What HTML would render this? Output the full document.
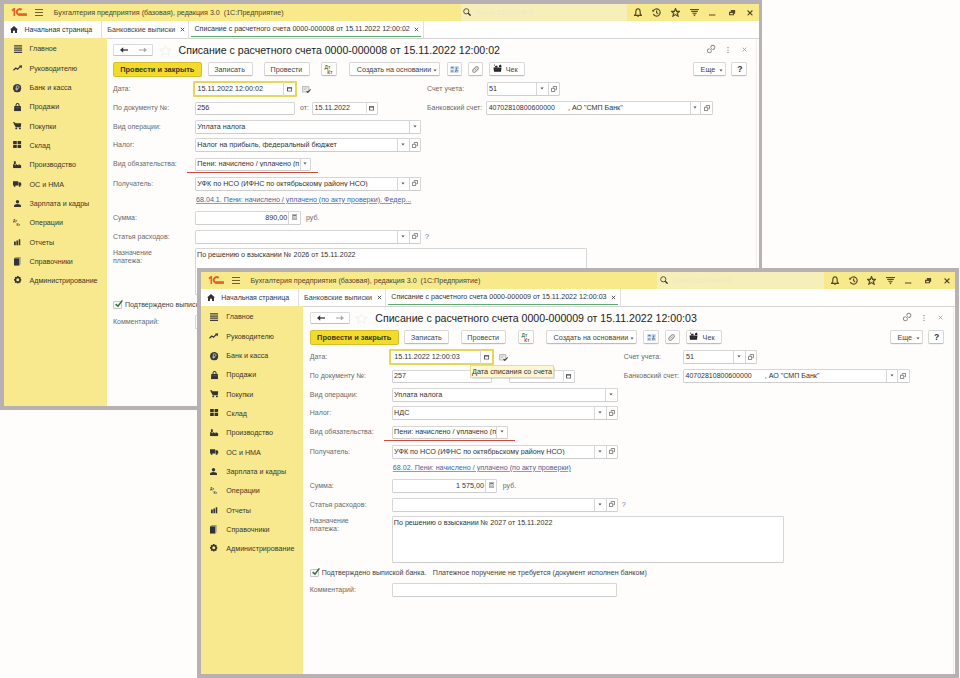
<!DOCTYPE html>
<html><head><meta charset="utf-8"><style>
html,body{margin:0;padding:0;}
body{width:960px;height:678px;position:relative;overflow:hidden;background:#fefdfc;font-family:"Liberation Sans",sans-serif;}
#wrap{position:absolute;left:0;top:0;width:960px;height:678px}
.win{position:absolute;width:762px;height:410px;overflow:hidden}
.r{position:absolute;display:block;overflow:visible}
.t{position:absolute;white-space:nowrap;line-height:1}
</style></head><body>

<svg width="0" height="0" style="position:absolute">
<defs>
<symbol id="dd" viewBox="0 0 4 3"><path d="M0.4 0.4H3.6L2 2.4Z" fill="#555"/></symbol>
<symbol id="op" viewBox="0 0 6 6"><path d="M2.3 1.6V0.45H5.55V3.7H4.4" fill="none" stroke="#666" stroke-width="0.8"/><path d="M0.45 2.3H3.7V5.55H0.45Z" fill="none" stroke="#666" stroke-width="0.8"/></symbol>
<symbol id="cal" viewBox="0 0 6 5"><path d="M0 0H6V5H0Z M1 1.6V4H5V1.6Z" fill="#444" fill-rule="evenodd"/></symbol>
<symbol id="logo" viewBox="0 0 16 8"><path d="M0.5 2.1L2.7 0H4.1V7.9H2.5V2.6L1.3 3.4Z" fill="#de6428"/><path d="M10.6 1.9A2.9 2.9 0 1 0 8.4 6.9" fill="none" stroke="#de6428" stroke-width="2"/><path d="M7.6 5.2H15.9V7.9H7.6Z" fill="#de6428"/></symbol>
<symbol id="ham" viewBox="0 0 8 7"><path d="M0 0.5H8M0 3.5H8M0 6.5H8" stroke="#6e6230" stroke-width="1.1"/></symbol>
<symbol id="home" viewBox="0 0 8 7"><path d="M4 0L8 3.6H7V7H5V4.8H3V7H1V3.6H0Z" fill="#333"/></symbol>
<symbol id="i0" viewBox="0 0 8 8"><path d="M0 0.3H8V1.5H0ZM0 2.4H8V3.6H0ZM0 4.5H8V5.7H0ZM0 6.6H8V7.8H0Z" fill="#3c3c3c"/></symbol>
<symbol id="i1" viewBox="0 0 10 6"><path d="M0.5 5.4L3 3L4.8 4.2L7.5 1.6" fill="none" stroke="#333" stroke-width="1.3"/><path d="M6.2 0.6L9.6 0.2L9 3.4Z" fill="#333"/></symbol>
<symbol id="i2" viewBox="0 0 8 8"><circle cx="4" cy="4" r="4" fill="#3a3a3a"/><path d="M3.2 6.3V1.8H4.6A1.2 1.2 0 0 1 4.6 4.2H2.5M2.5 5.2H4.8" fill="none" stroke="#bbb" stroke-width="0.8"/></symbol>
<symbol id="i3" viewBox="0 0 7 8"><path d="M0.3 3H6.7L7 8H0Z" fill="#333"/><path d="M2 3.2V2A1.5 1.5 0 0 1 5 2V3.2" fill="none" stroke="#333" stroke-width="1"/><path d="M1.5 4.6H5.5" stroke="#777" stroke-width="0.5"/></symbol>
<symbol id="i4" viewBox="0 0 8 7"><path d="M0 0.1H1.7L2.3 1.1H8L7.3 4.9H2.6Z" fill="#333"/><circle cx="3.1" cy="6.1" r="0.95" fill="#333"/><circle cx="6.6" cy="6.1" r="0.95" fill="#333"/></symbol>
<symbol id="i5" viewBox="0 0 8 7"><path d="M0 0H3.6V3.1H0ZM4.4 0H8V3.1H4.4ZM0 3.9H3.6V7H0ZM4.4 3.9H8V7H4.4Z" fill="#333"/></symbol>
<symbol id="i6" viewBox="0 0 8 7"><path d="M0 7V3L2.7 4.4V3L5.4 4.4V3L8 4.4V7Z" fill="#333"/><path d="M0.8 0.3H2.6V3.4H0.8Z" fill="#333"/></symbol>
<symbol id="i7" viewBox="0 0 9 6"><path d="M0 0H5.5V4.6H0ZM5.9 1.2H7.8L9 2.8V4.6H5.9Z" fill="#333"/><circle cx="1.8" cy="5" r="1" fill="#333"/><circle cx="7" cy="5" r="1" fill="#333"/></symbol>
<symbol id="i8" viewBox="0 0 7 7"><circle cx="3.5" cy="1.7" r="1.7" fill="#333"/><path d="M0 7V5.8Q0.3 3.9 3.5 3.9Q6.7 3.9 7 5.8V7Z" fill="#333"/></symbol>
<symbol id="i9" viewBox="0 0 8 7"><text x="0" y="3" font-family="Liberation Sans" font-size="3.5" font-weight="bold" fill="#3a3a3a">Дт</text><text x="3.6" y="6.9" font-family="Liberation Sans" font-size="3.5" font-weight="bold" fill="#3a3a3a">Кт</text></symbol>
<symbol id="i10" viewBox="0 0 7 7"><path d="M0 2.6H1.9V7H0ZM2.6 1.6H4.4V7H2.6ZM5.1 0.3H7V7H5.1Z" fill="#333"/></symbol>
<symbol id="i11" viewBox="0 0 7 9"><path d="M0 1.2H5.6V9H0Z" fill="#333"/><path d="M1.2 0H7V7.8H5.8V1.2H1.2Z" fill="#999"/></symbol>
<symbol id="i12" viewBox="0 0 8 8"><path d="M3.2 0H4.8L5.1 1.3L6.3 0.7L7.3 1.7L6.7 2.9L8 3.2V4.8L6.7 5.1L7.3 6.3L6.3 7.3L5.1 6.7L4.8 8H3.2L2.9 6.7L1.7 7.3L0.7 6.3L1.3 5.1L0 4.8V3.2L1.3 2.9L0.7 1.7L1.7 0.7L2.9 1.3Z" fill="#333"/><circle cx="4" cy="4" r="1.6" fill="#f7e68a"/></symbol>
<symbol id="search" viewBox="0 0 8 8"><circle cx="3.3" cy="3.3" r="2.6" fill="none" stroke="#5a5040" stroke-width="1"/><path d="M5.2 5.2L7.6 7.6" stroke="#333" stroke-width="1.4"/></symbol>
<symbol id="bell" viewBox="0 0 8 9"><path d="M4 0.8Q6.2 1 6.2 4V5.8L7.5 7.3H0.5L1.8 5.8V4Q1.8 1 4 0.8Z" fill="none" stroke="#54492c" stroke-width="1.15"/><circle cx="4" cy="8.2" r="0.8" fill="#54492c"/></symbol>
<symbol id="hist" viewBox="0 0 9 9"><path d="M1.3 3A3.6 3.6 0 1 1 1.3 6" fill="none" stroke="#54492c" stroke-width="1.15"/><path d="M0.2 1.6L2.4 3.3L0.4 4Z" fill="#54492c"/><path d="M4.6 2.4V4.8L6.2 5.8" fill="none" stroke="#54492c" stroke-width="1.15"/></symbol>
<symbol id="star" viewBox="0 0 9 9"><path d="M4.5 0.6L5.6 3.3L8.5 3.4L6.3 5.2L7.1 8.2L4.5 6.6L1.9 8.2L2.7 5.2L0.5 3.4L3.4 3.3Z" fill="none" stroke="#54492c" stroke-width="1.2"/></symbol>
<symbol id="filt" viewBox="0 0 9 8"><path d="M0 0.5H9M1.2 2.4H7.8M2.4 4.2H6.6" stroke="#54492c" stroke-width="1.15"/><path d="M3.2 5.6H5.8L4.5 7.4Z" fill="#54492c"/></symbol>
<symbol id="minim" viewBox="0 0 8 2"><path d="M0 1H8" stroke="#54492c" stroke-width="1.3"/></symbol>
<symbol id="rest" viewBox="0 0 7 6"><path d="M2 0H7V4H5.5V6H0V2H2Z M1.3 3.3V4.7H4.2V3.3Z" fill="#54492c" fill-rule="evenodd"/></symbol>
<symbol id="close" viewBox="0 0 6 6"><path d="M0.5 0.5L5.5 5.5M5.5 0.5L0.5 5.5" stroke="#54492c" stroke-width="1.2"/></symbol>
<symbol id="tabx" viewBox="0 0 5 5"><path d="M0.8 0.8L4.2 4.2M4.2 0.8L0.8 4.2" stroke="#444" stroke-width="0.9"/></symbol>
<symbol id="larr" viewBox="0 0 8 6"><path d="M8 3H1.5" stroke="#333" stroke-width="1.3"/><path d="M0 3L3.2 0.2V5.8Z" fill="#333"/></symbol>
<symbol id="rarr" viewBox="0 0 8 6"><path d="M0 3H6.5" stroke="#aaa" stroke-width="1.1"/><path d="M8 3L4.8 0.4V5.6Z" fill="#aaa"/></symbol>
<symbol id="fstar" viewBox="0 0 15 11"><path d="M7.5 0.5L9 4L13.5 4.2L10 6.6L11.2 10.5L7.5 8.3L3.8 10.5L5 6.6L1.5 4.2L6 4Z" fill="none" stroke="#f0f0f0" stroke-width="1"/></symbol>
<symbol id="link" viewBox="0 0 9 9"><g fill="none" stroke="#8c8c8c" stroke-width="0.9"><path d="M4.227 3.313A1.8 1.8 0 1 1 5.687 4.773"/><path d="M4.773 5.687A1.8 1.8 0 1 1 3.313 4.227"/><path d="M3.8 5.2L5.2 3.8"/></g></symbol>
<symbol id="dots" viewBox="0 0 2 6"><circle cx="1" cy="0.7" r="0.6" fill="#707070"/><circle cx="1" cy="3" r="0.6" fill="#707070"/><circle cx="1" cy="5.3" r="0.6" fill="#707070"/></symbol>
<symbol id="fclose" viewBox="0 0 5 5"><path d="M0.6 0.6L4.4 4.4M4.4 0.6L0.6 4.4" stroke="#9a9a9a" stroke-width="0.8"/></symbol>
<symbol id="dtkt" viewBox="0 0 10 9"><text x="0.6" y="4" font-family="Liberation Sans" font-size="4.8" font-weight="bold" fill="#4e7d44">Дт</text><text x="3.3" y="8.9" font-family="Liberation Sans" font-size="4.8" font-weight="bold" fill="#9c4a40">Кт</text></symbol>
<symbol id="tbl" viewBox="0 0 9 7"><path d="M0 0H9V7H0Z" fill="#dfe8f2"/><path d="M0.6 0.6H4V3H0.6ZM5 0.6H8.4V3H5ZM0.6 4H4V6.4H0.6ZM5 4H8.4V6.4H5Z" fill="#b3c6dc"/><path d="M1.2 1.5H3.4M2 4.3V6M6.8 1.5L5.5 6M6.5 4.6H7.8" stroke="#5a7596" stroke-width="0.9"/></symbol>
<symbol id="clip" viewBox="0 0 7 7"><g transform="rotate(-45 3.5 3.5)"><rect x="0.2" y="2" width="6.6" height="3" rx="1.5" fill="none" stroke="#9a9a9a" stroke-width="1.2"/><path d="M2 3.5H5" stroke="#aaa" stroke-width="0.9"/></g></symbol>
<symbol id="kkm" viewBox="0 0 9 8"><path d="M0.5 3.5H8.5L8 7.8H1Z" fill="#222"/><path d="M1.5 3.5L2.5 1.8H4.5L4.5 3.5Z" fill="#222"/><path d="M6 1.5L8 0.4L8.5 3H6Z" fill="#222"/><circle cx="1.5" cy="1" r="0.6" fill="#222"/><path d="M2 5.2H7" stroke="#777" stroke-width="0.4"/></symbol>
<symbol id="docck" viewBox="0 0 9 7"><path d="M0.4 0.4H6.8V6H0.4Z" fill="#eee" stroke="#aaa" stroke-width="0.8"/><path d="M1.5 2H5.5M1.5 3.5H4" stroke="#aaa" stroke-width="0.6"/><path d="M4.5 5.2L5.8 6.4L8.6 3.4" fill="none" stroke="#444" stroke-width="1.1"/></symbol>
<symbol id="calc" viewBox="0 0 5 6"><path d="M0.3 0.3H4.7V5.7H0.3Z" fill="none" stroke="#666" stroke-width="0.6"/><path d="M1 1H4V2.2H1Z" fill="#777"/><path d="M1 3.2H1.8M2.1 3.2H2.9M3.2 3.2H4M1 4.6H1.8M2.1 4.6H2.9M3.2 4.6H4" stroke="#777" stroke-width="0.7"/></symbol>
<symbol id="ck" viewBox="0 0 9 9"><path d="M1.6 4.2L4 6.2L8.4 0.4" fill="none" stroke="#3c6a48" stroke-width="1.5"/></symbol>
</defs></svg>

<div id="wrap">
<div class="win" style="left:0px;top:0px">
<div class="r" style="left:0px;top:0px;width:762.00px;height:410.00px;background:#b7b1b3"></div>
<div class="r" style="left:4px;top:4px;width:754.50px;height:16.70px;background:#f8e98a"></div>
<div class="r" style="left:4px;top:20.7px;width:754.50px;height:17.30px;background:#fff"></div>
<div class="r" style="left:4px;top:38px;width:754.50px;height:1.00px;background:#d4d4d4"></div>
<div class="r" style="left:4px;top:38px;width:102.50px;height:368.00px;background:#f8e98e"></div>
<div class="r" style="left:106.5px;top:39px;width:652.00px;height:367.00px;background:#fefdfb"></div>
<div class="r" style="left:755.8px;top:39px;width:0.70px;height:367.00px;background:#eeeeee"></div>
<svg class="r" style="left:11px;top:8px;" width="16.00" height="8.00"><use href="#logo"/></svg>
<svg class="r" style="left:35px;top:8.7px;" width="8.00" height="7.00"><use href="#ham"/></svg>
<div class="t" style="left:53.8px;top:9.61px;font-size:7.15px;color:#4b4530;font-weight:normal;">Бухгалтерия предприятия (базовая), редакция 3.0&nbsp; (1С:Предприятие)</div>
<div class="r" style="left:460.5px;top:4px;width:166.50px;height:16.70px;background:#f7efb9"></div>
<svg class="r" style="left:463px;top:8.3px;" width="8.00" height="8.00"><use href="#search"/></svg>
<div class="t" style="left:475.5px;top:9.38px;font-size:7px;color:#efe8c4;font-weight:normal;">Поиск Ctrl+Shift+F</div>
<svg class="r" style="left:633.8px;top:8.2px;" width="8.00" height="9.00"><use href="#bell"/></svg>
<svg class="r" style="left:652.2px;top:8px;" width="9.00" height="9.00"><use href="#hist"/></svg>
<svg class="r" style="left:670.7px;top:7.8px;" width="9.00" height="9.00"><use href="#star"/></svg>
<svg class="r" style="left:689.7px;top:8.7px;" width="9.00" height="8.00"><use href="#filt"/></svg>
<svg class="r" style="left:708.7px;top:13.8px;" width="6.60" height="2.00"><use href="#minim"/></svg>
<svg class="r" style="left:728.6px;top:9.8px;" width="6.40" height="5.50"><use href="#rest"/></svg>
<svg class="r" style="left:747.2px;top:9.7px;" width="6.00" height="5.80"><use href="#close"/></svg>
<svg class="r" style="left:10px;top:25.5px;" width="8.00" height="7.00"><use href="#home"/></svg>
<div class="t" style="left:24.5px;top:25.98px;font-size:7.0px;color:#333;font-weight:normal;">Начальная страница</div>
<div class="r" style="left:101.2px;top:21px;width:0.80px;height:17.00px;background:#e0e0e0"></div>
<div class="t" style="left:107.3px;top:25.88px;font-size:7.2px;color:#444;font-weight:normal;">Банковские выписки</div>
<svg class="r" style="left:179.8px;top:27.2px;" width="5.00" height="5.00"><use href="#tabx"/></svg>
<div class="r" style="left:188.2px;top:21px;width:0.80px;height:17.00px;background:#e0e0e0"></div>
<div class="t" style="left:194.5px;top:25.93px;font-size:7.1px;color:#333;font-weight:normal;">Списание с расчетного счета 0000-000008 от 15.11.2022 12:00:02</div>
<svg class="r" style="left:414.2px;top:27.2px;" width="5.00" height="5.00"><use href="#tabx"/></svg>
<div class="r" style="left:191px;top:35.9px;width:230.00px;height:1.30px;background:#62a872"></div>
<div class="r" style="left:423px;top:21px;width:0.80px;height:17.00px;background:#e0e0e0"></div>
<div class="t" style="left:29.5px;top:46.21px;font-size:7.15px;color:#3a3628;font-weight:normal;">Главное</div>
<svg class="r" style="left:13.6px;top:44.8px;" width="8.30" height="8.20"><use href="#i0"/></svg>
<div class="t" style="left:29.5px;top:65.54px;font-size:7.15px;color:#3a3628;font-weight:normal;">Руководителю</div>
<svg class="r" style="left:12.6px;top:64.6px;" width="9.50" height="6.00"><use href="#i1"/></svg>
<div class="t" style="left:29.5px;top:84.87px;font-size:7.15px;color:#3a3628;font-weight:normal;">Банк и касса</div>
<svg class="r" style="left:13.4px;top:83.5px;" width="8.40" height="8.40"><use href="#i2"/></svg>
<div class="t" style="left:29.5px;top:104.20px;font-size:7.15px;color:#3a3628;font-weight:normal;">Продажи</div>
<svg class="r" style="left:13.9px;top:103.2px;" width="7.10" height="8.20"><use href="#i3"/></svg>
<div class="t" style="left:29.5px;top:123.53px;font-size:7.15px;color:#3a3628;font-weight:normal;">Покупки</div>
<svg class="r" style="left:12.9px;top:122.2px;" width="8.40" height="7.50"><use href="#i4"/></svg>
<div class="t" style="left:29.5px;top:142.86px;font-size:7.15px;color:#3a3628;font-weight:normal;">Склад</div>
<svg class="r" style="left:12.9px;top:141.2px;" width="8.40" height="7.10"><use href="#i5"/></svg>
<div class="t" style="left:29.5px;top:162.19px;font-size:7.15px;color:#3a3628;font-weight:normal;">Производство</div>
<svg class="r" style="left:12.9px;top:161px;" width="8.40" height="7.20"><use href="#i6"/></svg>
<div class="t" style="left:29.5px;top:181.52px;font-size:7.15px;color:#3a3628;font-weight:normal;">ОС и НМА</div>
<svg class="r" style="left:12.9px;top:181.2px;" width="8.50" height="6.00"><use href="#i7"/></svg>
<div class="t" style="left:29.5px;top:200.85px;font-size:7.15px;color:#3a3628;font-weight:normal;">Зарплата и кадры</div>
<svg class="r" style="left:13.5px;top:200px;" width="7.00" height="7.00"><use href="#i8"/></svg>
<div class="t" style="left:29.5px;top:220.18px;font-size:7.15px;color:#3a3628;font-weight:normal;">Операции</div>
<svg class="r" style="left:13.3px;top:219px;" width="7.70" height="7.20"><use href="#i9"/></svg>
<div class="t" style="left:29.5px;top:239.51px;font-size:7.15px;color:#3a3628;font-weight:normal;">Отчеты</div>
<svg class="r" style="left:13.9px;top:238.8px;" width="6.50" height="6.50"><use href="#i10"/></svg>
<div class="t" style="left:29.5px;top:258.84px;font-size:7.15px;color:#3a3628;font-weight:normal;">Справочники</div>
<svg class="r" style="left:13.6px;top:256.9px;" width="6.80" height="8.80"><use href="#i11"/></svg>
<div class="t" style="left:29.5px;top:278.17px;font-size:7.15px;color:#3a3628;font-weight:normal;">Администрирование</div>
<svg class="r" style="left:13.5px;top:276.3px;" width="7.50" height="7.70"><use href="#i12"/></svg>
<div class="r" style="left:113.3px;top:43.75px;width:40.00px;height:12.55px;border:1px solid #dadada;border-bottom-color:#c2c2c2;background:#fff;box-sizing:border-box;border-radius:1.5px"></div>
<svg class="r" style="left:119.8px;top:47.3px;" width="8.00" height="6.00"><use href="#larr"/></svg>
<svg class="r" style="left:139.3px;top:47.3px;" width="8.00" height="6.00"><use href="#rarr"/></svg>
<svg class="r" style="left:157.5px;top:44.6px;" width="15.00" height="11.00"><use href="#fstar"/></svg>
<div class="t" style="left:178.5px;top:45.33px;font-size:10.6px;color:#222;font-weight:normal;">Списание с расчетного счета 0000-000008 от 15.11.2022 12:00:02</div>
<svg class="r" style="left:705.6px;top:44.4px;" width="10.20" height="10.20"><use href="#link"/></svg>
<svg class="r" style="left:726.6px;top:46.8px;" width="2.00" height="6.00"><use href="#dots"/></svg>
<svg class="r" style="left:741.5px;top:47px;" width="5.00" height="5.00"><use href="#fclose"/></svg>
<div class="r" style="left:113.1px;top:62px;width:88.80px;height:14.80px;background:#f3db2c;border:1px solid #d5bf2a;box-sizing:border-box;border-radius:2px"></div>
<div class="t" style="left:120.3px;top:65.58px;font-size:7.4px;color:#3a3420;font-weight:bold;">Провести и закрыть</div>
<div class="r" style="left:207.5px;top:62.2px;width:45.00px;height:14.00px;border:1px solid #d8d8d8;border-bottom-color:#bdbdbd;background:#fff;box-sizing:border-box;border-radius:2px;box-shadow:0 0.5px 0.5px rgba(0,0,0,0.08)"></div>
<div class="t" style="left:214.2px;top:65.88px;font-size:7.2px;color:#444;font-weight:normal;">Записать</div>
<div class="r" style="left:263.75px;top:62.2px;width:45.75px;height:14.00px;border:1px solid #d8d8d8;border-bottom-color:#bdbdbd;background:#fff;box-sizing:border-box;border-radius:2px;box-shadow:0 0.5px 0.5px rgba(0,0,0,0.08)"></div>
<div class="t" style="left:270.5px;top:65.88px;font-size:7.2px;color:#444;font-weight:normal;">Провести</div>
<div class="r" style="left:349.3px;top:62.2px;width:90.90px;height:14.00px;border:1px solid #d8d8d8;border-bottom-color:#bdbdbd;background:#fff;box-sizing:border-box;border-radius:2px;box-shadow:0 0.5px 0.5px rgba(0,0,0,0.08)"></div>
<div class="t" style="left:356.8px;top:65.88px;font-size:7.2px;color:#444;font-weight:normal;">Создать на основании</div>
<div class="r" style="left:489.4px;top:62.2px;width:35.60px;height:14.00px;border:1px solid #d8d8d8;border-bottom-color:#bdbdbd;background:#fff;box-sizing:border-box;border-radius:2px;box-shadow:0 0.5px 0.5px rgba(0,0,0,0.08)"></div>
<div class="t" style="left:505.8px;top:65.88px;font-size:7.2px;color:#444;font-weight:normal;">Чек</div>
<div class="r" style="left:693px;top:62.2px;width:33.40px;height:14.00px;border:1px solid #d8d8d8;border-bottom-color:#bdbdbd;background:#fff;box-sizing:border-box;border-radius:2px;box-shadow:0 0.5px 0.5px rgba(0,0,0,0.08)"></div>
<div class="t" style="left:700.6px;top:65.88px;font-size:7.2px;color:#444;font-weight:normal;">Еще</div>
<div class="r" style="left:731.2px;top:62.2px;width:15.80px;height:14.00px;border:1px solid #d8d8d8;border-bottom-color:#bdbdbd;background:#fff;box-sizing:border-box;border-radius:2px;box-shadow:0 0.5px 0.5px rgba(0,0,0,0.08)"></div>
<div class="t" style="left:737.2px;top:65.16px;font-size:8.6px;color:#333;font-weight:bold;">?</div>
<svg class="r" style="left:433.2px;top:68.6px;" width="4.00" height="3.00"><use href="#dd"/></svg>
<svg class="r" style="left:719.2px;top:68.6px;" width="4.00" height="3.00"><use href="#dd"/></svg>
<div class="r" style="left:321px;top:62.2px;width:16.20px;height:14.00px;border:1px solid #d8d8d8;border-bottom-color:#bdbdbd;background:#fff;box-sizing:border-box;border-radius:2px;box-shadow:0 0.5px 0.5px rgba(0,0,0,0.08)"></div>
<div class="r" style="left:446.6px;top:62.2px;width:15.90px;height:14.00px;border:1px solid #d8d8d8;border-bottom-color:#bdbdbd;background:#fff;box-sizing:border-box;border-radius:2px;box-shadow:0 0.5px 0.5px rgba(0,0,0,0.08)"></div>
<div class="r" style="left:467.8px;top:62.2px;width:15.60px;height:14.00px;border:1px solid #d8d8d8;border-bottom-color:#bdbdbd;background:#fff;box-sizing:border-box;border-radius:2px;box-shadow:0 0.5px 0.5px rgba(0,0,0,0.08)"></div>
<svg class="r" style="left:324.2px;top:64.6px;" width="10.00" height="9.00"><use href="#dtkt"/></svg>
<svg class="r" style="left:450px;top:65.5px;" width="9.00" height="7.00"><use href="#tbl"/></svg>
<svg class="r" style="left:471.5px;top:66px;" width="7.00" height="7.00"><use href="#clip"/></svg>
<svg class="r" style="left:492.7px;top:64.4px;" width="9.00" height="8.00"><use href="#kkm"/></svg>
<div class="t" style="left:113px;top:85.38px;font-size:7.0px;color:#6a6a6a;font-weight:normal;">Дата:</div>
<div class="r" style="left:192.6px;top:80.6px;width:104.70px;height:16.90px;border:2px solid #e6d65a;background:#fff;box-sizing:border-box;border-radius:1px"></div>
<div class="t" style="left:197.5px;top:85.33px;font-size:7.2px;color:#333;width:96.8px;overflow:hidden">15.11.2022 12:00:02</div>
<div class="r" style="left:283.2px;top:82.1px;width:0.80px;height:13.90px;background:#dadada"></div>
<svg class="r" style="left:287.15px;top:86.64999999999999px;" width="5.20" height="4.80"><use href="#cal"/></svg>
<svg class="r" style="left:301.9px;top:85.6px;" width="9.00" height="7.00"><use href="#docck"/></svg>
<div class="t" style="left:427px;top:85.38px;font-size:7.0px;color:#6a6a6a;font-weight:normal;">Счет учета:</div>
<div class="r" style="left:486.6px;top:82.2px;width:73.80px;height:13.60px;border:1px solid #d6d6d6;border-bottom-color:#cdcdcd;background:#fff;box-sizing:border-box;border-radius:1.5px"></div>
<div class="t" style="left:489.1px;top:84.98px;font-size:7.2px;color:#333;width:67.9px;overflow:hidden">51</div>
<div class="r" style="left:535.85px;top:83.2px;width:0.80px;height:11.60px;background:#d6d6d6"></div>
<svg class="r" style="left:539.725px;top:87.0px;" width="4.00" height="3.00"><use href="#dd"/></svg>
<div class="r" style="left:547.8000000000001px;top:83.2px;width:0.80px;height:11.60px;background:#d6d6d6"></div>
<svg class="r" style="left:551.1px;top:85.5px;" width="6.00" height="6.00"><use href="#op"/></svg>
<div class="t" style="left:113px;top:104.38px;font-size:7.0px;color:#6a6a6a;font-weight:normal;">По документу №:</div>
<div class="r" style="left:194.8px;top:101.5px;width:100.10px;height:13.60px;border:1px solid #d6d6d6;border-bottom-color:#cdcdcd;background:#fff;box-sizing:border-box;border-radius:1.5px"></div>
<div class="t" style="left:197.3px;top:104.28px;font-size:7.2px;color:#333;width:94.2px;overflow:hidden">256</div>
<div class="t" style="left:300px;top:104.38px;font-size:7.0px;color:#6a6a6a;font-weight:normal;">от:</div>
<div class="r" style="left:312px;top:101.5px;width:66.40px;height:13.60px;border:1px solid #d6d6d6;border-bottom-color:#cdcdcd;background:#fff;box-sizing:border-box;border-radius:1.5px"></div>
<div class="t" style="left:314.5px;top:104.28px;font-size:7.2px;color:#333;width:60.5px;overflow:hidden">15.11.2022</div>
<div class="r" style="left:366px;top:103.0px;width:0.80px;height:10.00px;background:#dadada"></div>
<svg class="r" style="left:368.9px;top:105.6px;" width="5.20" height="4.80"><use href="#cal"/></svg>
<div class="t" style="left:427px;top:104.38px;font-size:7.0px;color:#6a6a6a;font-weight:normal;">Банковский счет:</div>
<div class="r" style="left:486.2px;top:101px;width:226.70px;height:14.10px;border:1px solid #d6d6d6;border-bottom-color:#cdcdcd;background:#fff;box-sizing:border-box;border-radius:1.5px"></div>
<div class="t" style="left:488.7px;top:104.13px;font-size:7.0px;color:#333;width:220.8px;overflow:hidden">40702810800600000</div>
<div class="r" style="left:689.6px;top:102px;width:0.80px;height:12.10px;background:#d6d6d6"></div>
<svg class="r" style="left:692.75px;top:106.05px;" width="4.00" height="3.00"><use href="#dd"/></svg>
<div class="r" style="left:700.1px;top:102px;width:0.80px;height:12.10px;background:#d6d6d6"></div>
<svg class="r" style="left:703.5px;top:104.55px;" width="6.00" height="6.00"><use href="#op"/></svg>
<div class="t" style="left:568px;top:104.63px;font-size:7.1px;color:#333;font-weight:normal;">, АО "СМП Банк"</div>
<div class="t" style="left:113px;top:123.38px;font-size:7.0px;color:#6a6a6a;font-weight:normal;">Вид операции:</div>
<div class="r" style="left:194.8px;top:120px;width:226.60px;height:14.10px;border:1px solid #d6d6d6;border-bottom-color:#cdcdcd;background:#fff;box-sizing:border-box;border-radius:1.5px"></div>
<div class="t" style="left:197.3px;top:123.03px;font-size:7.2px;color:#333;width:220.7px;overflow:hidden">Уплата налога</div>
<div class="r" style="left:408.6px;top:121px;width:0.80px;height:12.10px;background:#d6d6d6"></div>
<svg class="r" style="left:412.5px;top:125.05px;" width="4.00" height="3.00"><use href="#dd"/></svg>
<div class="t" style="left:113px;top:141.38px;font-size:7.0px;color:#6a6a6a;font-weight:normal;">Налог:</div>
<div class="r" style="left:194.8px;top:138.2px;width:226.60px;height:13.80px;border:1px solid #d6d6d6;border-bottom-color:#cdcdcd;background:#fff;box-sizing:border-box;border-radius:1.5px"></div>
<div class="t" style="left:197.3px;top:141.08px;font-size:7.2px;color:#333;width:220.7px;overflow:hidden">Налог на прибыль, федеральный бюджет</div>
<div class="r" style="left:397.1px;top:139.2px;width:0.80px;height:11.80px;background:#d6d6d6"></div>
<svg class="r" style="left:401.0px;top:143.10000000000002px;" width="4.00" height="3.00"><use href="#dd"/></svg>
<div class="r" style="left:409.1px;top:139.2px;width:0.80px;height:11.80px;background:#d6d6d6"></div>
<svg class="r" style="left:412.25px;top:141.60000000000002px;" width="6.00" height="6.00"><use href="#op"/></svg>
<div class="t" style="left:113px;top:160.38px;font-size:7.0px;color:#6a6a6a;font-weight:normal;">Вид обязательства:</div>
<div class="r" style="left:194.8px;top:157.5px;width:116.60px;height:13.60px;border:1px solid #d6d6d6;border-bottom-color:#cdcdcd;background:#fff;box-sizing:border-box;border-radius:1.5px"></div>
<div class="t" style="left:197.3px;top:160.28px;font-size:7.2px;color:#333;width:102.7px;overflow:hidden">Пени: начислено / уплачено (п</div>
<div class="r" style="left:299.6px;top:158.5px;width:0.80px;height:11.60px;background:#d6d6d6"></div>
<svg class="r" style="left:303.0px;top:162.3px;" width="4.00" height="3.00"><use href="#dd"/></svg>
<div class="r" style="left:187px;top:171.6px;width:131.30px;height:1.90px;background:#cc4a3e"></div>
<div class="t" style="left:113px;top:179.88px;font-size:7.0px;color:#6a6a6a;font-weight:normal;">Получатель:</div>
<div class="r" style="left:194.8px;top:177px;width:226.60px;height:13.60px;border:1px solid #d6d6d6;border-bottom-color:#cdcdcd;background:#fff;box-sizing:border-box;border-radius:1.5px"></div>
<div class="t" style="left:197.3px;top:179.78px;font-size:7.2px;color:#333;width:220.7px;overflow:hidden">УФК по НСО (ИФНС по октябрьскому району НСО)</div>
<div class="r" style="left:397.1px;top:178px;width:0.80px;height:11.60px;background:#d6d6d6"></div>
<svg class="r" style="left:401.0px;top:181.8px;" width="4.00" height="3.00"><use href="#dd"/></svg>
<div class="r" style="left:409.1px;top:178px;width:0.80px;height:11.60px;background:#d6d6d6"></div>
<svg class="r" style="left:412.25px;top:180.3px;" width="6.00" height="6.00"><use href="#op"/></svg>
<div class="t" style="left:196px;top:196.81px;font-size:7.15px;color:#4a64a0;font-weight:normal;text-decoration:underline;text-decoration-color:#8a9cc4">68.04.1. Пени: начислено / уплачено (по акту проверки). Федер...</div>
<div class="t" style="left:113px;top:214.38px;font-size:7.0px;color:#6a6a6a;font-weight:normal;">Сумма:</div>
<div class="r" style="left:194.8px;top:211px;width:105.80px;height:14.10px;border:1px solid #d6d6d6;border-bottom-color:#cdcdcd;background:#fff;box-sizing:border-box;border-radius:1.5px"></div>
<div class="r" style="left:288.4px;top:212px;width:0.80px;height:12.50px;background:#d6d6d6"></div>
<svg class="r" style="left:291.9px;top:213.8px;" width="5.20" height="6.00"><use href="#calc"/></svg>
<div class="t" style="left:287.2px;top:214.28px;font-size:7.2px;color:#333;font-weight:normal;transform:translateX(-100%);">890,00</div>
<div class="t" style="left:306px;top:214.38px;font-size:7.0px;color:#6a6a6a;font-weight:normal;">руб.</div>
<div class="t" style="left:113px;top:232.88px;font-size:7.0px;color:#6a6a6a;font-weight:normal;">Статья расходов:</div>
<div class="r" style="left:194.8px;top:230px;width:226.60px;height:13.60px;border:1px solid #d6d6d6;border-bottom-color:#cdcdcd;background:#fff;box-sizing:border-box;border-radius:1.5px"></div>
<div class="r" style="left:397.1px;top:231px;width:0.80px;height:11.60px;background:#d6d6d6"></div>
<svg class="r" style="left:401.0px;top:234.8px;" width="4.00" height="3.00"><use href="#dd"/></svg>
<div class="r" style="left:409.1px;top:231px;width:0.80px;height:11.60px;background:#d6d6d6"></div>
<svg class="r" style="left:412.25px;top:233.3px;" width="6.00" height="6.00"><use href="#op"/></svg>
<div class="t" style="left:425px;top:232.73px;font-size:7.3px;color:#6a7a9a;font-weight:normal;">?</div>
<div class="t" style="left:113px;top:248.88px;font-size:7.0px;color:#6a6a6a;font-weight:normal;">Назначение</div>
<div class="t" style="left:113px;top:257.38px;font-size:7.0px;color:#6a6a6a;font-weight:normal;">платежа:</div>
<div class="r" style="left:194.8px;top:248.4px;width:392.60px;height:46.40px;border:1px solid #d6d6d6;border-bottom-color:#cdcdcd;background:#fff;box-sizing:border-box;border-radius:1.5px"></div>
<div class="t" style="left:197px;top:251.61px;font-size:7.15px;color:#333;font-weight:normal;">По решению о взыскании № 2026 от 15.11.2022</div>
<div class="r" style="left:113.4px;top:300.7px;width:8.80px;height:8.30px;border:1px solid #c8c8c8;background:#f4fbf4;box-sizing:border-box;border-radius:1px"></div>
<svg class="r" style="left:114px;top:300px;" width="9.00" height="9.00"><use href="#ck"/></svg>
<div class="t" style="left:124.9px;top:301.93px;font-size:7.1px;color:#444;font-weight:normal;">Подтверждено выписк</div>
<div class="t" style="left:113px;top:318.38px;font-size:7.0px;color:#6a6a6a;font-weight:normal;">Комментарий:</div>
<div class="r" style="left:194.8px;top:315.2px;width:225.60px;height:13.60px;border:1px solid #d6d6d6;border-bottom-color:#cdcdcd;background:#fff;box-sizing:border-box;border-radius:1.5px"></div>
</div>
<div class="win" style="left:196.8px;top:268px">
<div class="r" style="left:0px;top:0px;width:762.00px;height:410.00px;background:#b7b1b3"></div>
<div class="r" style="left:4px;top:4px;width:754.50px;height:16.70px;background:#f8e98a"></div>
<div class="r" style="left:4px;top:20.7px;width:754.50px;height:17.30px;background:#fff"></div>
<div class="r" style="left:4px;top:38px;width:754.50px;height:1.00px;background:#d4d4d4"></div>
<div class="r" style="left:4px;top:38px;width:102.50px;height:368.00px;background:#f8e98e"></div>
<div class="r" style="left:106.5px;top:39px;width:652.00px;height:367.00px;background:#fefdfb"></div>
<div class="r" style="left:755.8px;top:39px;width:0.70px;height:367.00px;background:#eeeeee"></div>
<svg class="r" style="left:11px;top:8px;" width="16.00" height="8.00"><use href="#logo"/></svg>
<svg class="r" style="left:35px;top:8.7px;" width="8.00" height="7.00"><use href="#ham"/></svg>
<div class="t" style="left:53.8px;top:9.61px;font-size:7.15px;color:#4b4530;font-weight:normal;">Бухгалтерия предприятия (базовая), редакция 3.0&nbsp; (1С:Предприятие)</div>
<div class="r" style="left:460.5px;top:4px;width:166.50px;height:16.70px;background:#f7efb9"></div>
<svg class="r" style="left:463px;top:8.3px;" width="8.00" height="8.00"><use href="#search"/></svg>
<div class="t" style="left:475.5px;top:9.38px;font-size:7px;color:#efe8c4;font-weight:normal;">Поиск Ctrl+Shift+F</div>
<svg class="r" style="left:633.8px;top:8.2px;" width="8.00" height="9.00"><use href="#bell"/></svg>
<svg class="r" style="left:652.2px;top:8px;" width="9.00" height="9.00"><use href="#hist"/></svg>
<svg class="r" style="left:670.7px;top:7.8px;" width="9.00" height="9.00"><use href="#star"/></svg>
<svg class="r" style="left:689.7px;top:8.7px;" width="9.00" height="8.00"><use href="#filt"/></svg>
<svg class="r" style="left:708.7px;top:13.8px;" width="6.60" height="2.00"><use href="#minim"/></svg>
<svg class="r" style="left:728.6px;top:9.8px;" width="6.40" height="5.50"><use href="#rest"/></svg>
<svg class="r" style="left:747.2px;top:9.7px;" width="6.00" height="5.80"><use href="#close"/></svg>
<svg class="r" style="left:10px;top:25.5px;" width="8.00" height="7.00"><use href="#home"/></svg>
<div class="t" style="left:24.5px;top:25.98px;font-size:7.0px;color:#333;font-weight:normal;">Начальная страница</div>
<div class="r" style="left:101.2px;top:21px;width:0.80px;height:17.00px;background:#e0e0e0"></div>
<div class="t" style="left:107.3px;top:25.88px;font-size:7.2px;color:#444;font-weight:normal;">Банковские выписки</div>
<svg class="r" style="left:179.8px;top:27.2px;" width="5.00" height="5.00"><use href="#tabx"/></svg>
<div class="r" style="left:188.2px;top:21px;width:0.80px;height:17.00px;background:#e0e0e0"></div>
<div class="t" style="left:194.5px;top:25.93px;font-size:7.1px;color:#333;font-weight:normal;">Списание с расчетного счета 0000-000009 от 15.11.2022 12:00:03</div>
<svg class="r" style="left:414.2px;top:27.2px;" width="5.00" height="5.00"><use href="#tabx"/></svg>
<div class="r" style="left:191px;top:35.9px;width:230.00px;height:1.30px;background:#62a872"></div>
<div class="r" style="left:423px;top:21px;width:0.80px;height:17.00px;background:#e0e0e0"></div>
<div class="t" style="left:29.5px;top:46.21px;font-size:7.15px;color:#3a3628;font-weight:normal;">Главное</div>
<svg class="r" style="left:13.6px;top:44.8px;" width="8.30" height="8.20"><use href="#i0"/></svg>
<div class="t" style="left:29.5px;top:65.54px;font-size:7.15px;color:#3a3628;font-weight:normal;">Руководителю</div>
<svg class="r" style="left:12.6px;top:64.6px;" width="9.50" height="6.00"><use href="#i1"/></svg>
<div class="t" style="left:29.5px;top:84.87px;font-size:7.15px;color:#3a3628;font-weight:normal;">Банк и касса</div>
<svg class="r" style="left:13.4px;top:83.5px;" width="8.40" height="8.40"><use href="#i2"/></svg>
<div class="t" style="left:29.5px;top:104.20px;font-size:7.15px;color:#3a3628;font-weight:normal;">Продажи</div>
<svg class="r" style="left:13.9px;top:103.2px;" width="7.10" height="8.20"><use href="#i3"/></svg>
<div class="t" style="left:29.5px;top:123.53px;font-size:7.15px;color:#3a3628;font-weight:normal;">Покупки</div>
<svg class="r" style="left:12.9px;top:122.2px;" width="8.40" height="7.50"><use href="#i4"/></svg>
<div class="t" style="left:29.5px;top:142.86px;font-size:7.15px;color:#3a3628;font-weight:normal;">Склад</div>
<svg class="r" style="left:12.9px;top:141.2px;" width="8.40" height="7.10"><use href="#i5"/></svg>
<div class="t" style="left:29.5px;top:162.19px;font-size:7.15px;color:#3a3628;font-weight:normal;">Производство</div>
<svg class="r" style="left:12.9px;top:161px;" width="8.40" height="7.20"><use href="#i6"/></svg>
<div class="t" style="left:29.5px;top:181.52px;font-size:7.15px;color:#3a3628;font-weight:normal;">ОС и НМА</div>
<svg class="r" style="left:12.9px;top:181.2px;" width="8.50" height="6.00"><use href="#i7"/></svg>
<div class="t" style="left:29.5px;top:200.85px;font-size:7.15px;color:#3a3628;font-weight:normal;">Зарплата и кадры</div>
<svg class="r" style="left:13.5px;top:200px;" width="7.00" height="7.00"><use href="#i8"/></svg>
<div class="t" style="left:29.5px;top:220.18px;font-size:7.15px;color:#3a3628;font-weight:normal;">Операции</div>
<svg class="r" style="left:13.3px;top:219px;" width="7.70" height="7.20"><use href="#i9"/></svg>
<div class="t" style="left:29.5px;top:239.51px;font-size:7.15px;color:#3a3628;font-weight:normal;">Отчеты</div>
<svg class="r" style="left:13.9px;top:238.8px;" width="6.50" height="6.50"><use href="#i10"/></svg>
<div class="t" style="left:29.5px;top:258.84px;font-size:7.15px;color:#3a3628;font-weight:normal;">Справочники</div>
<svg class="r" style="left:13.6px;top:256.9px;" width="6.80" height="8.80"><use href="#i11"/></svg>
<div class="t" style="left:29.5px;top:278.17px;font-size:7.15px;color:#3a3628;font-weight:normal;">Администрирование</div>
<svg class="r" style="left:13.5px;top:276.3px;" width="7.50" height="7.70"><use href="#i12"/></svg>
<div class="r" style="left:113.3px;top:43.75px;width:40.00px;height:12.55px;border:1px solid #dadada;border-bottom-color:#c2c2c2;background:#fff;box-sizing:border-box;border-radius:1.5px"></div>
<svg class="r" style="left:119.8px;top:47.3px;" width="8.00" height="6.00"><use href="#larr"/></svg>
<svg class="r" style="left:139.3px;top:47.3px;" width="8.00" height="6.00"><use href="#rarr"/></svg>
<svg class="r" style="left:157.5px;top:44.6px;" width="15.00" height="11.00"><use href="#fstar"/></svg>
<div class="t" style="left:178.5px;top:45.33px;font-size:10.6px;color:#222;font-weight:normal;">Списание с расчетного счета 0000-000009 от 15.11.2022 12:00:03</div>
<svg class="r" style="left:705.6px;top:44.4px;" width="10.20" height="10.20"><use href="#link"/></svg>
<svg class="r" style="left:726.6px;top:46.8px;" width="2.00" height="6.00"><use href="#dots"/></svg>
<svg class="r" style="left:741.5px;top:47px;" width="5.00" height="5.00"><use href="#fclose"/></svg>
<div class="r" style="left:113.1px;top:62px;width:88.80px;height:14.80px;background:#f3db2c;border:1px solid #d5bf2a;box-sizing:border-box;border-radius:2px"></div>
<div class="t" style="left:120.3px;top:65.58px;font-size:7.4px;color:#3a3420;font-weight:bold;">Провести и закрыть</div>
<div class="r" style="left:207.5px;top:62.2px;width:45.00px;height:14.00px;border:1px solid #d8d8d8;border-bottom-color:#bdbdbd;background:#fff;box-sizing:border-box;border-radius:2px;box-shadow:0 0.5px 0.5px rgba(0,0,0,0.08)"></div>
<div class="t" style="left:214.2px;top:65.88px;font-size:7.2px;color:#444;font-weight:normal;">Записать</div>
<div class="r" style="left:263.75px;top:62.2px;width:45.75px;height:14.00px;border:1px solid #d8d8d8;border-bottom-color:#bdbdbd;background:#fff;box-sizing:border-box;border-radius:2px;box-shadow:0 0.5px 0.5px rgba(0,0,0,0.08)"></div>
<div class="t" style="left:270.5px;top:65.88px;font-size:7.2px;color:#444;font-weight:normal;">Провести</div>
<div class="r" style="left:349.3px;top:62.2px;width:90.90px;height:14.00px;border:1px solid #d8d8d8;border-bottom-color:#bdbdbd;background:#fff;box-sizing:border-box;border-radius:2px;box-shadow:0 0.5px 0.5px rgba(0,0,0,0.08)"></div>
<div class="t" style="left:356.8px;top:65.88px;font-size:7.2px;color:#444;font-weight:normal;">Создать на основании</div>
<div class="r" style="left:489.4px;top:62.2px;width:35.60px;height:14.00px;border:1px solid #d8d8d8;border-bottom-color:#bdbdbd;background:#fff;box-sizing:border-box;border-radius:2px;box-shadow:0 0.5px 0.5px rgba(0,0,0,0.08)"></div>
<div class="t" style="left:505.8px;top:65.88px;font-size:7.2px;color:#444;font-weight:normal;">Чек</div>
<div class="r" style="left:693px;top:62.2px;width:33.40px;height:14.00px;border:1px solid #d8d8d8;border-bottom-color:#bdbdbd;background:#fff;box-sizing:border-box;border-radius:2px;box-shadow:0 0.5px 0.5px rgba(0,0,0,0.08)"></div>
<div class="t" style="left:700.6px;top:65.88px;font-size:7.2px;color:#444;font-weight:normal;">Еще</div>
<div class="r" style="left:731.2px;top:62.2px;width:15.80px;height:14.00px;border:1px solid #d8d8d8;border-bottom-color:#bdbdbd;background:#fff;box-sizing:border-box;border-radius:2px;box-shadow:0 0.5px 0.5px rgba(0,0,0,0.08)"></div>
<div class="t" style="left:737.2px;top:65.16px;font-size:8.6px;color:#333;font-weight:bold;">?</div>
<svg class="r" style="left:433.2px;top:68.6px;" width="4.00" height="3.00"><use href="#dd"/></svg>
<svg class="r" style="left:719.2px;top:68.6px;" width="4.00" height="3.00"><use href="#dd"/></svg>
<div class="r" style="left:321px;top:62.2px;width:16.20px;height:14.00px;border:1px solid #d8d8d8;border-bottom-color:#bdbdbd;background:#fff;box-sizing:border-box;border-radius:2px;box-shadow:0 0.5px 0.5px rgba(0,0,0,0.08)"></div>
<div class="r" style="left:446.6px;top:62.2px;width:15.90px;height:14.00px;border:1px solid #d8d8d8;border-bottom-color:#bdbdbd;background:#fff;box-sizing:border-box;border-radius:2px;box-shadow:0 0.5px 0.5px rgba(0,0,0,0.08)"></div>
<div class="r" style="left:467.8px;top:62.2px;width:15.60px;height:14.00px;border:1px solid #d8d8d8;border-bottom-color:#bdbdbd;background:#fff;box-sizing:border-box;border-radius:2px;box-shadow:0 0.5px 0.5px rgba(0,0,0,0.08)"></div>
<svg class="r" style="left:324.2px;top:64.6px;" width="10.00" height="9.00"><use href="#dtkt"/></svg>
<svg class="r" style="left:450px;top:65.5px;" width="9.00" height="7.00"><use href="#tbl"/></svg>
<svg class="r" style="left:471.5px;top:66px;" width="7.00" height="7.00"><use href="#clip"/></svg>
<svg class="r" style="left:492.7px;top:64.4px;" width="9.00" height="8.00"><use href="#kkm"/></svg>
<div class="t" style="left:113px;top:85.38px;font-size:7.0px;color:#6a6a6a;font-weight:normal;">Дата:</div>
<div class="r" style="left:192.6px;top:80.6px;width:104.70px;height:16.90px;border:2px solid #e6d65a;background:#fff;box-sizing:border-box;border-radius:1px"></div>
<div class="t" style="left:197.5px;top:85.33px;font-size:7.2px;color:#333;width:96.8px;overflow:hidden">15.11.2022 12:00:03</div>
<div class="r" style="left:283.2px;top:82.1px;width:0.80px;height:13.90px;background:#dadada"></div>
<svg class="r" style="left:287.15px;top:86.64999999999999px;" width="5.20" height="4.80"><use href="#cal"/></svg>
<svg class="r" style="left:301.9px;top:85.6px;" width="9.00" height="7.00"><use href="#docck"/></svg>
<div class="t" style="left:427px;top:85.38px;font-size:7.0px;color:#6a6a6a;font-weight:normal;">Счет учета:</div>
<div class="r" style="left:486.6px;top:82.2px;width:73.80px;height:13.60px;border:1px solid #d6d6d6;border-bottom-color:#cdcdcd;background:#fff;box-sizing:border-box;border-radius:1.5px"></div>
<div class="t" style="left:489.1px;top:84.98px;font-size:7.2px;color:#333;width:67.9px;overflow:hidden">51</div>
<div class="r" style="left:535.85px;top:83.2px;width:0.80px;height:11.60px;background:#d6d6d6"></div>
<svg class="r" style="left:539.725px;top:87.0px;" width="4.00" height="3.00"><use href="#dd"/></svg>
<div class="r" style="left:547.8000000000001px;top:83.2px;width:0.80px;height:11.60px;background:#d6d6d6"></div>
<svg class="r" style="left:551.1px;top:85.5px;" width="6.00" height="6.00"><use href="#op"/></svg>
<div class="t" style="left:113px;top:104.38px;font-size:7.0px;color:#6a6a6a;font-weight:normal;">По документу №:</div>
<div class="r" style="left:194.8px;top:101.5px;width:100.10px;height:13.60px;border:1px solid #d6d6d6;border-bottom-color:#cdcdcd;background:#fff;box-sizing:border-box;border-radius:1.5px"></div>
<div class="t" style="left:197.3px;top:104.28px;font-size:7.2px;color:#333;width:94.2px;overflow:hidden">257</div>
<div class="t" style="left:300px;top:104.38px;font-size:7.0px;color:#6a6a6a;font-weight:normal;">от:</div>
<div class="r" style="left:312px;top:101.5px;width:66.40px;height:13.60px;border:1px solid #d6d6d6;border-bottom-color:#cdcdcd;background:#fff;box-sizing:border-box;border-radius:1.5px"></div>
<div class="t" style="left:314.5px;top:104.28px;font-size:7.2px;color:#333;width:60.5px;overflow:hidden">15.11.2022</div>
<div class="r" style="left:366px;top:103.0px;width:0.80px;height:10.00px;background:#dadada"></div>
<svg class="r" style="left:368.9px;top:105.6px;" width="5.20" height="4.80"><use href="#cal"/></svg>
<div class="t" style="left:427px;top:104.38px;font-size:7.0px;color:#6a6a6a;font-weight:normal;">Банковский счет:</div>
<div class="r" style="left:486.2px;top:101px;width:226.70px;height:14.10px;border:1px solid #d6d6d6;border-bottom-color:#cdcdcd;background:#fff;box-sizing:border-box;border-radius:1.5px"></div>
<div class="t" style="left:488.7px;top:104.13px;font-size:7.0px;color:#333;width:220.8px;overflow:hidden">40702810800600000</div>
<div class="r" style="left:689.6px;top:102px;width:0.80px;height:12.10px;background:#d6d6d6"></div>
<svg class="r" style="left:692.75px;top:106.05px;" width="4.00" height="3.00"><use href="#dd"/></svg>
<div class="r" style="left:700.1px;top:102px;width:0.80px;height:12.10px;background:#d6d6d6"></div>
<svg class="r" style="left:703.5px;top:104.55px;" width="6.00" height="6.00"><use href="#op"/></svg>
<div class="t" style="left:568px;top:104.63px;font-size:7.1px;color:#333;font-weight:normal;">, АО "СМП Банк"</div>
<div class="t" style="left:113px;top:123.38px;font-size:7.0px;color:#6a6a6a;font-weight:normal;">Вид операции:</div>
<div class="r" style="left:194.8px;top:120px;width:226.60px;height:14.10px;border:1px solid #d6d6d6;border-bottom-color:#cdcdcd;background:#fff;box-sizing:border-box;border-radius:1.5px"></div>
<div class="t" style="left:197.3px;top:123.03px;font-size:7.2px;color:#333;width:220.7px;overflow:hidden">Уплата налога</div>
<div class="r" style="left:408.6px;top:121px;width:0.80px;height:12.10px;background:#d6d6d6"></div>
<svg class="r" style="left:412.5px;top:125.05px;" width="4.00" height="3.00"><use href="#dd"/></svg>
<div class="t" style="left:113px;top:141.38px;font-size:7.0px;color:#6a6a6a;font-weight:normal;">Налог:</div>
<div class="r" style="left:194.8px;top:138.2px;width:226.60px;height:13.80px;border:1px solid #d6d6d6;border-bottom-color:#cdcdcd;background:#fff;box-sizing:border-box;border-radius:1.5px"></div>
<div class="t" style="left:197.3px;top:141.08px;font-size:7.2px;color:#333;width:220.7px;overflow:hidden">НДС</div>
<div class="r" style="left:397.1px;top:139.2px;width:0.80px;height:11.80px;background:#d6d6d6"></div>
<svg class="r" style="left:401.0px;top:143.10000000000002px;" width="4.00" height="3.00"><use href="#dd"/></svg>
<div class="r" style="left:409.1px;top:139.2px;width:0.80px;height:11.80px;background:#d6d6d6"></div>
<svg class="r" style="left:412.25px;top:141.60000000000002px;" width="6.00" height="6.00"><use href="#op"/></svg>
<div class="t" style="left:113px;top:160.38px;font-size:7.0px;color:#6a6a6a;font-weight:normal;">Вид обязательства:</div>
<div class="r" style="left:194.8px;top:157.5px;width:116.60px;height:13.60px;border:1px solid #d6d6d6;border-bottom-color:#cdcdcd;background:#fff;box-sizing:border-box;border-radius:1.5px"></div>
<div class="t" style="left:197.3px;top:160.28px;font-size:7.2px;color:#333;width:102.7px;overflow:hidden">Пени: начислено / уплачено (п</div>
<div class="r" style="left:299.6px;top:158.5px;width:0.80px;height:11.60px;background:#d6d6d6"></div>
<svg class="r" style="left:303.0px;top:162.3px;" width="4.00" height="3.00"><use href="#dd"/></svg>
<div class="r" style="left:187px;top:171.6px;width:131.30px;height:1.90px;background:#cc4a3e"></div>
<div class="t" style="left:113px;top:179.88px;font-size:7.0px;color:#6a6a6a;font-weight:normal;">Получатель:</div>
<div class="r" style="left:194.8px;top:177px;width:226.60px;height:13.60px;border:1px solid #d6d6d6;border-bottom-color:#cdcdcd;background:#fff;box-sizing:border-box;border-radius:1.5px"></div>
<div class="t" style="left:197.3px;top:179.78px;font-size:7.2px;color:#333;width:220.7px;overflow:hidden">УФК по НСО (ИФНС по октябрьскому району НСО)</div>
<div class="r" style="left:397.1px;top:178px;width:0.80px;height:11.60px;background:#d6d6d6"></div>
<svg class="r" style="left:401.0px;top:181.8px;" width="4.00" height="3.00"><use href="#dd"/></svg>
<div class="r" style="left:409.1px;top:178px;width:0.80px;height:11.60px;background:#d6d6d6"></div>
<svg class="r" style="left:412.25px;top:180.3px;" width="6.00" height="6.00"><use href="#op"/></svg>
<div class="t" style="left:196px;top:196.81px;font-size:7.15px;color:#4a64a0;font-weight:normal;text-decoration:underline;text-decoration-color:#8a9cc4">68.02. Пени: начислено / уплачено (по акту проверки)</div>
<div class="t" style="left:113px;top:214.38px;font-size:7.0px;color:#6a6a6a;font-weight:normal;">Сумма:</div>
<div class="r" style="left:194.8px;top:211px;width:105.80px;height:14.10px;border:1px solid #d6d6d6;border-bottom-color:#cdcdcd;background:#fff;box-sizing:border-box;border-radius:1.5px"></div>
<div class="r" style="left:288.4px;top:212px;width:0.80px;height:12.50px;background:#d6d6d6"></div>
<svg class="r" style="left:291.9px;top:213.8px;" width="5.20" height="6.00"><use href="#calc"/></svg>
<div class="t" style="left:287.2px;top:214.28px;font-size:7.2px;color:#333;font-weight:normal;transform:translateX(-100%);">1 575,00</div>
<div class="t" style="left:306px;top:214.38px;font-size:7.0px;color:#6a6a6a;font-weight:normal;">руб.</div>
<div class="t" style="left:113px;top:232.88px;font-size:7.0px;color:#6a6a6a;font-weight:normal;">Статья расходов:</div>
<div class="r" style="left:194.8px;top:230px;width:226.60px;height:13.60px;border:1px solid #d6d6d6;border-bottom-color:#cdcdcd;background:#fff;box-sizing:border-box;border-radius:1.5px"></div>
<div class="r" style="left:397.1px;top:231px;width:0.80px;height:11.60px;background:#d6d6d6"></div>
<svg class="r" style="left:401.0px;top:234.8px;" width="4.00" height="3.00"><use href="#dd"/></svg>
<div class="r" style="left:409.1px;top:231px;width:0.80px;height:11.60px;background:#d6d6d6"></div>
<svg class="r" style="left:412.25px;top:233.3px;" width="6.00" height="6.00"><use href="#op"/></svg>
<div class="t" style="left:425px;top:232.73px;font-size:7.3px;color:#6a7a9a;font-weight:normal;">?</div>
<div class="t" style="left:113px;top:248.88px;font-size:7.0px;color:#6a6a6a;font-weight:normal;">Назначение</div>
<div class="t" style="left:113px;top:257.38px;font-size:7.0px;color:#6a6a6a;font-weight:normal;">платежа:</div>
<div class="r" style="left:194.8px;top:248.4px;width:392.60px;height:46.40px;border:1px solid #d6d6d6;border-bottom-color:#cdcdcd;background:#fff;box-sizing:border-box;border-radius:1.5px"></div>
<div class="t" style="left:197px;top:251.61px;font-size:7.15px;color:#333;font-weight:normal;">По решению о взыскании № 2027 от 15.11.2022</div>
<div class="r" style="left:113.4px;top:300.7px;width:8.80px;height:8.30px;border:1px solid #c8c8c8;background:#f4fbf4;box-sizing:border-box;border-radius:1px"></div>
<svg class="r" style="left:114px;top:300px;" width="9.00" height="9.00"><use href="#ck"/></svg>
<div class="t" style="left:124.9px;top:301.93px;font-size:7.1px;color:#444;font-weight:normal;">Подтверждено выпиской банка.</div>
<div class="t" style="left:236px;top:301.93px;font-size:7.1px;color:#444;font-weight:normal;">Платежное поручение не требуется (документ исполнен банком)</div>
<div class="t" style="left:113px;top:318.38px;font-size:7.0px;color:#6a6a6a;font-weight:normal;">Комментарий:</div>
<div class="r" style="left:194.8px;top:315.2px;width:225.60px;height:13.60px;border:1px solid #d6d6d6;border-bottom-color:#cdcdcd;background:#fff;box-sizing:border-box;border-radius:1.5px"></div>
<div class="r" style="left:273.3px;top:97.3px;width:83.50px;height:13.20px;background:#fcf6d2;border:1px solid #e6dc9e;box-sizing:border-box;box-shadow:0.5px 0.5px 1px rgba(0,0,0,0.12)"></div>
<div class="t" style="left:275.2px;top:99.83px;font-size:7.3px;color:#333;font-weight:normal;">Дата списания со счета</div>
</div>
</div>
</body></html>
